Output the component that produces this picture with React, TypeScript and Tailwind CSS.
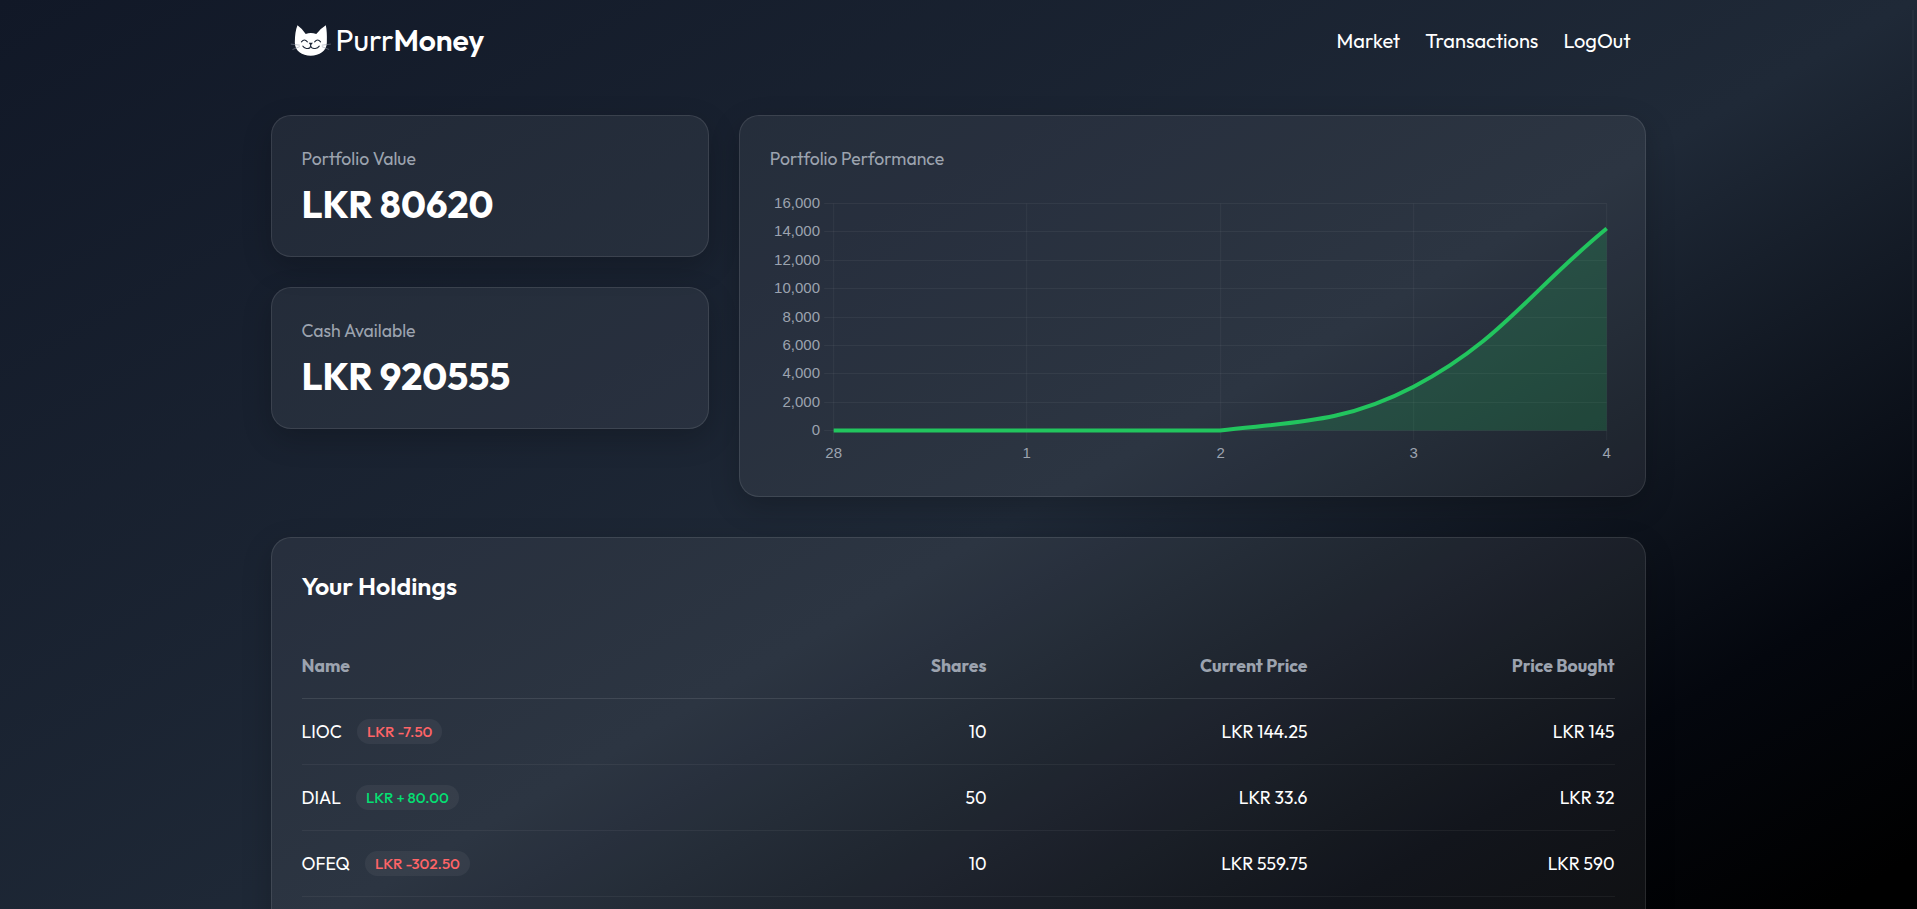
import type { ReactNode } from 'react';
import clsx from 'clsx';

type Holding = { name: string; gain: number; shares: number; price: number; bought: number };

const holdings: Holding[] = [
  { name: 'LIOC', gain: -7.5, shares: 10, price: 144.25, bought: 145 },
  { name: 'DIAL', gain: 80, shares: 50, price: 33.6, bought: 32 },
  { name: 'OFEQ', gain: -302.5, shares: 10, price: 559.75, bought: 590 },
];

const days = ['28', '1', '2', '3', '4'];
const ticks = [16000, 14000, 12000, 10000, 8000, 6000, 4000, 2000, 0];

// plot area inside the 845x276 chart
const LEFT = 63.67;
const RIGHT = 836.67;
const TOP = 13.5;
const BOTTOM = 240.5;

function CatLogo() {
  return (
    <svg viewBox="0 0 126 100" className="mb-[2px] h-[33px] w-[42px] shrink-0" fill="none">
      <path
        d="M22 4 Q14 24 14 56 C14 82 36 96 62 96 C88 96 111 82 111 56 Q112 24 108 4 Q92 14 79 30 Q62 25 47 30 Q36 14 22 4Z"
        fill="#fff"
      />
      <g stroke="#1b2536" strokeWidth="3.2" strokeLinecap="round">
        <path d="M34 54 Q43 43 52 54" />
        <path d="M74 54 Q83 43 92 54" />
        <path d="M62 62 V67 Q60 76 49 74 Q41 73 38 67" />
        <path d="M62 67 Q65 76 76 74 Q84 73 88 67" />
      </g>
      <path d="M56 57 H69 L62 65Z" fill="#1b2536" />
      <g stroke="#8b93a1" strokeWidth="1.6" strokeLinecap="round">
        <path d="M3 61 L28 64" />
        <path d="M8 77 L28 69" />
        <path d="M122 61 L97 64" />
        <path d="M117 77 L97 69" />
      </g>
    </svg>
  );
}

function Card({ className, children }: { className?: string; children: ReactNode }) {
  return (
    <section
      className={clsx(
        'rounded-[20px] border border-white/10 bg-white/[0.06] px-[30px] shadow-[0_10px_30px_rgba(0,0,0,0.2)]',
        className,
      )}
    >
      {children}
    </section>
  );
}

function StatCard({ label, value }: { label: string; value: string }) {
  return (
    <Card className="h-[142px] pt-[29px]">
      <p className="text-[17.6px] leading-[27px] text-[#9ca3af]">{label}</p>
      <p className="mt-[9px] text-[37.5px] leading-[46px] font-bold">{value}</p>
    </Card>
  );
}

function PerformanceChart() {
  const stepX = (RIGHT - LEFT) / (days.length - 1);
  const stepY = (BOTTOM - TOP) / (ticks.length - 1);
  const curve = 'M63.67 240.5 H450.17 C528.1 231.6 575.1 232.5 643.6 196.7 C729.9 151.7 759.4 101.8 836.67 38.5';

  return (
    <svg viewBox="0 0 845 276" className="block h-[276px] w-[845px] font-['Liberation_Sans',Arial,sans-serif]">
      {ticks.map((t, i) => {
        const y = Math.floor(TOP + i * stepY) + 0.5;
        return (
          <g key={t}>
            <line x1={LEFT - 9.5} x2={RIGHT} y1={y} y2={y} stroke="#fff" strokeOpacity="0.05" />
            <text x="50" y={y + 4.4} fontSize="15" textAnchor="end" fill="#9ca3af">
              {t.toLocaleString('en-US')}
            </text>
          </g>
        );
      })}
      {days.map((d, i) => {
        const x = LEFT + Math.round(i * stepX);
        return (
          <g key={d}>
            <line x1={x} x2={x} y1={TOP} y2={BOTTOM + 9.5} stroke="#fff" strokeOpacity="0.05" />
            <text x={x} y="268" fontSize="15" textAnchor="middle" fill="#9ca3af">
              {d}
            </text>
          </g>
        );
      })}
      <path d={`${curve} V240.5 Z`} fill="#22c55e" fillOpacity="0.2" />
      <path d={curve} fill="none" stroke="#22c55e" strokeWidth="4" />
    </svg>
  );
}

function GainPill({ gain }: { gain: number }) {
  return (
    <span
      className={clsx(
        'inline-flex h-[25px] items-center rounded-full bg-white/5 px-[10px] text-[15px] font-medium',
        gain < 0 ? 'text-[#ff6467]' : 'text-[#05df72]',
      )}
    >
      LKR {gain < 0 ? gain.toFixed(2) : `+ ${gain.toFixed(2)}`}
    </span>
  );
}

export default function App() {
  return (
    <div className="relative h-screen overflow-hidden bg-[linear-gradient(150deg,#111827_0px,#1f2937_958px,#04070e_1450px,#000_1700px)] pr-px font-[Outfit,Lato,sans-serif] text-white">
      <div className="mx-auto w-[1375px]">
        <header className="flex h-[82px] items-center justify-between pr-[15px] pl-[19px]">
          <div className="flex items-center gap-[4px]">
            <CatLogo />
            <span className="mb-[2px] text-[30px] leading-none tracking-[-0.1px]">
              Purr<b className="font-semibold">Money</b>
            </span>
          </div>
          <nav className="flex gap-[25px] text-[20px]">
            <a href="#market">Market</a>
            <a href="#transactions">Transactions</a>
            <a href="#logout">LogOut</a>
          </nav>
        </header>

        <main className="pt-[33px]">
          <div className="grid grid-cols-3 gap-[30px]">
            <div className="flex flex-col gap-[30px]">
              <StatCard label="Portfolio Value" value="LKR 80620" />
              <StatCard label="Cash Available" value="LKR 920555" />
            </div>
            <Card className="col-span-2 h-[382px] pt-[29px]">
              <p className="mb-[18px] text-[17.6px] leading-[27px] text-[#9ca3af]">Portfolio Performance</p>
              <PerformanceChart />
            </Card>
          </div>

          <Card className="mt-[40px] h-[560px] pt-[29px]">
            <h2 className="text-[25px] leading-[38px] font-semibold">Your Holdings</h2>
            <table className="mt-[27px] w-full table-fixed text-right text-[17.6px]">
              <thead>
                <tr className="h-[66px] border-b border-white/10 font-bold text-[#9ca3af]">
                  <th className="w-[443px] pt-[2px] text-left">Name</th>
                  <th className="w-[242px] pt-[2px]">Shares</th>
                  <th className="w-[321px] pt-[2px]">Current Price</th>
                  <th className="pt-[2px]">Price Bought</th>
                </tr>
              </thead>
              <tbody>
                {holdings.map((h) => (
                  <tr key={h.name} className="h-[66px] border-b border-white/5">
                    <td className="pt-[2px] text-left">
                      <div className="flex items-center gap-[15px]">
                        {h.name}
                        <GainPill gain={h.gain} />
                      </div>
                    </td>
                    <td className="pt-[2px]">{h.shares}</td>
                    <td className="pt-[2px]">LKR {h.price}</td>
                    <td className="pt-[2px]">LKR {h.bought}</td>
                  </tr>
                ))}
              </tbody>
            </table>
          </Card>
        </main>
      </div>

      {/* slim scroll thumb */}
      <div className="absolute top-[10px] right-[3px] h-[680px] w-[2px] bg-white/[0.03]" />
    </div>
  );
}
